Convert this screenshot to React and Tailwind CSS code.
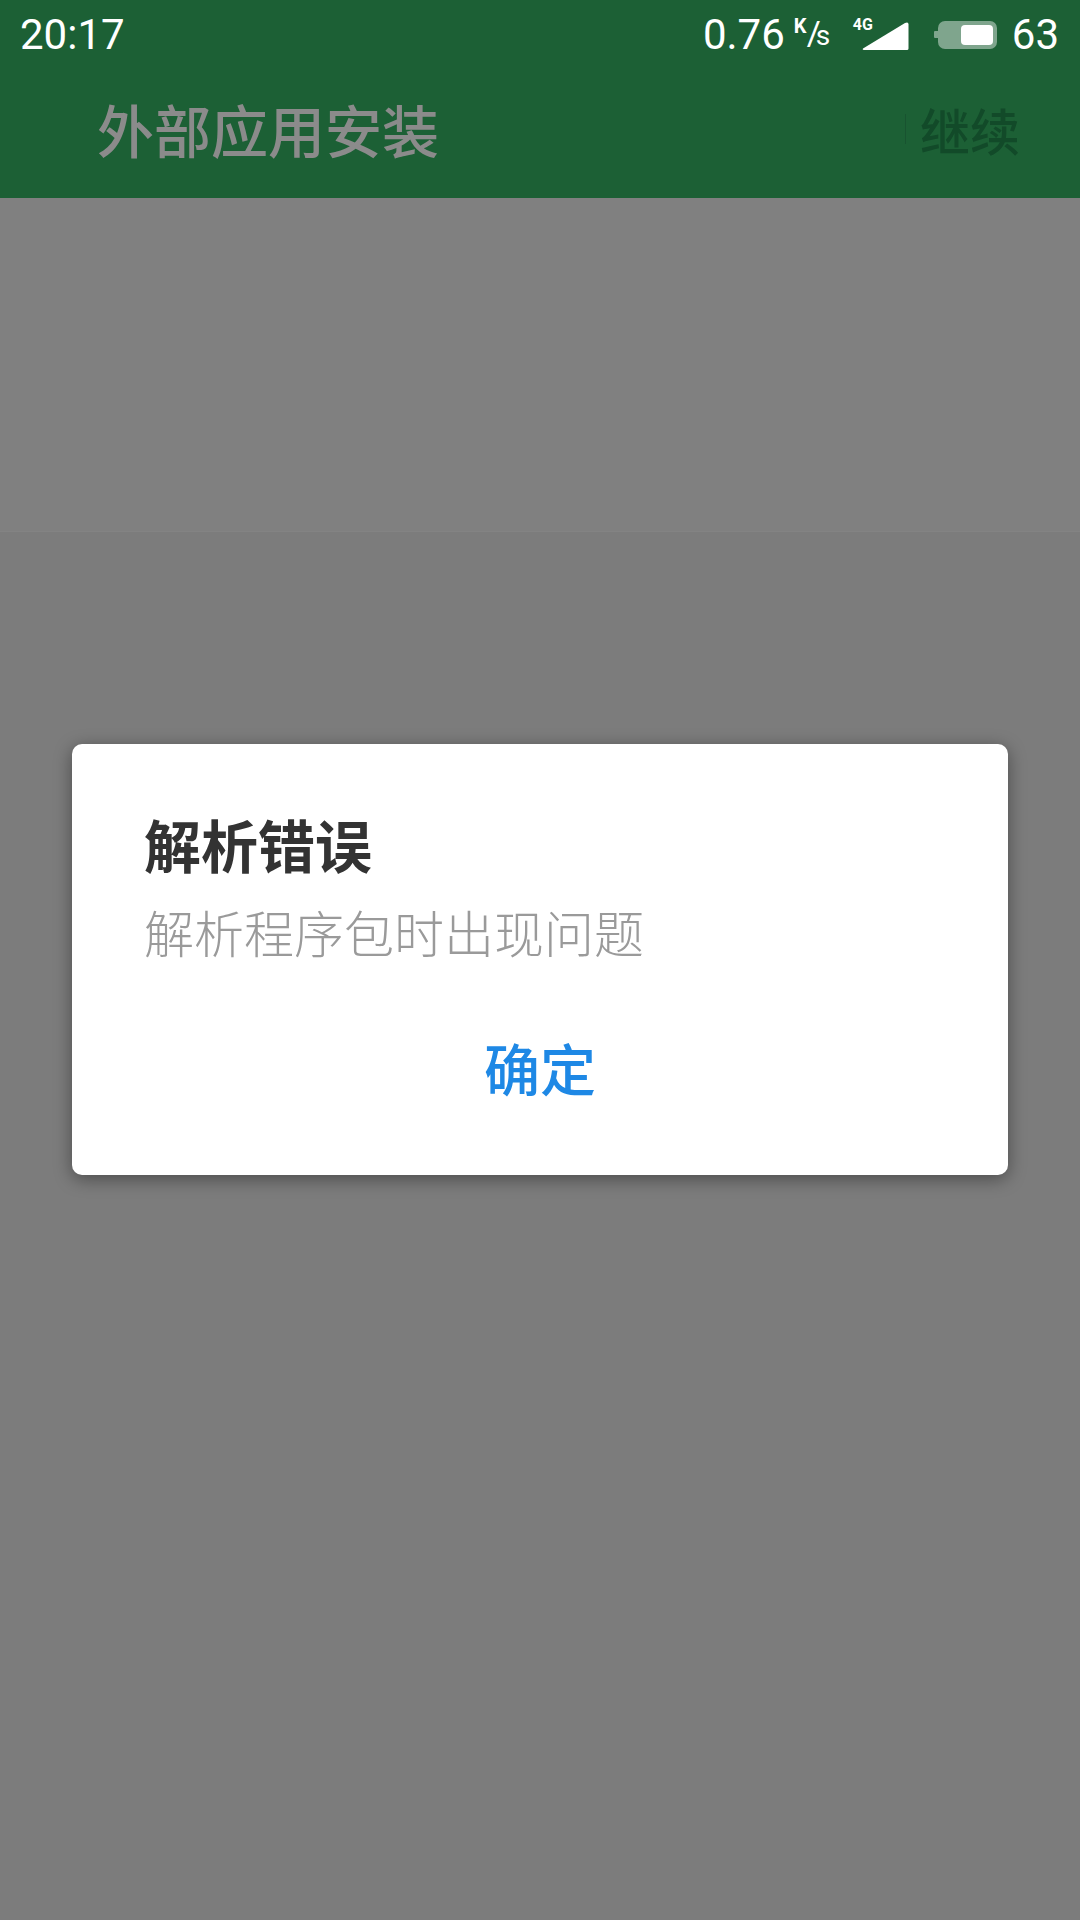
import React from 'react'

const cjk = { fontFamily: '"Noto Sans CJK SC", sans-serif' }

const SignalIcon = () => (
  <svg width="47" height="28" viewBox="0 0 47 28" className="block">
    <path d="M1 26.5 L43 1 Q46.5 -0.6 46.5 2.5 L46.5 26.5 Q46.5 28 45 28 L2 28 Q0 28 1 26.5 Z" fill="#fff" />
  </svg>
)

const BatteryIcon = () => (
  <svg width="63" height="28" viewBox="0 0 63 28" className="block">
    <rect x="0" y="10" width="6" height="7" rx="1" fill="#7fa58d" />
    <rect x="4" y="0" width="59" height="28" rx="7" fill="#7fa58d" />
    <rect x="27" y="4" width="32" height="20" rx="4" fill="#fff" />
  </svg>
)

export default function App() {
  return (
    <div className="relative flex h-[1920px] w-[1080px] flex-col overflow-hidden bg-[#7c7c7c]">
      <div className="h-[198px] shrink-0 bg-[#1c6035]">
        <div className="flex h-[70px] items-center justify-between pl-[20px] pr-[21px] text-white" style={{ fontFamily: 'Roboto, sans-serif' }}>
          <span className="text-[42px] leading-none">20:17</span>
          <div className="flex items-center">
            <span className="text-[42px] leading-none">0.76</span>
            <span className="relative ml-[9px] h-[34px] w-[36px]">
              <span className="absolute left-0 top-[-2px] text-[20px] font-bold leading-none">K</span>
              <span className="absolute left-[13px] top-[-2px] text-[34px] leading-none">/</span>
              <span className="absolute left-[22px] top-[4px] text-[28px] leading-none">s</span>
            </span>
            <span className="relative ml-[23px] h-[32px] w-[56px]">
              <span className="absolute left-0 top-[-2px] text-[16px] font-bold leading-none">4G</span>
              <span className="absolute right-0 top-[3px]"><SignalIcon /></span>
            </span>
            <span className="ml-[25px]"><BatteryIcon /></span>
            <span className="ml-[15px] text-[42px] leading-none">63</span>
          </div>
        </div>
        <div className="flex h-[128px] items-center justify-between pb-[11px] pl-[97px] pr-[60px]" style={cjk}>
          <span className="text-[57px] font-medium leading-none text-[#8b8b8b]">外部应用安装</span>
          <div className="flex items-center gap-[14px]">
            <span className="h-[30px] w-px bg-[#185330]" />
            <span className="text-[50px] font-medium leading-none text-[#124a29]">继续</span>
          </div>
        </div>
      </div>

      <div className="h-[334px] shrink-0 border-b border-[#838383] bg-[#808080]" />
      <div className="flex-1 bg-[#7c7c7c]" />

      <div
        className="absolute left-[72px] top-[744px] flex h-[431px] w-[936px] flex-col rounded-[10px] bg-white shadow-[0_4px_18px_rgba(0,0,0,0.4)]"
        style={cjk}
      >
        <div className="px-[72px] pt-[65px]">
          <h2 className="text-[57px] font-bold leading-[68px] text-[#333333]">解析错误</h2>
          <p className="mt-[24px] text-[50px] font-light leading-[60px] text-[#9a9a9a]">解析程序包时出现问题</p>
        </div>
        <div className="flex flex-1 items-start justify-center pt-[72px]">
          <span className="text-[56px] font-medium leading-[68px] text-[#1e88e5]">确定</span>
        </div>
      </div>
    </div>
  )
}
